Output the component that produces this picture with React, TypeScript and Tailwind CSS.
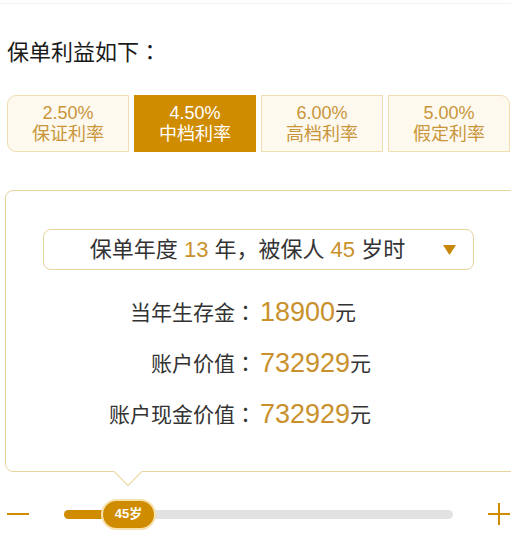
import { useState } from "react";

const rates = [
  { rate: "2.50%", name: "保证利率" },
  { rate: "4.50%", name: "中档利率" },
  { rate: "6.00%", name: "高档利率" },
  { rate: "5.00%", name: "假定利率" },
];

const rows = [
  { label: "当年生存金", value: "18900" },
  { label: "账户价值", value: "732929" },
  { label: "账户现金价值", value: "732929" },
];

// centred full-width colon, like the reference font draws it
const Colon = () => <span style={{ fontFamily: '"Noto Sans CJK JP", sans-serif' }}>：</span>;

export default function App() {
  const [active, setActive] = useState(1);

  return (
    <div
      className="w-[511px] h-[533px] overflow-hidden bg-white text-[#333]"
      style={{ fontFamily: '"Liberation Sans", "Noto Sans CJK SC", sans-serif' }}
    >
      <div className="h-[3px]" />
      <div className="h-px bg-[#f2f2f2]" />

      <h2 className="mt-[31px] pl-[7px] text-[22px] leading-[30px] text-[#1a1a1a]">
        保单利益如下<Colon />
      </h2>

      <div className="mt-[27px] flex gap-[5px] pl-[7px]">
        {rates.map((r, i) => (
          <button
            key={r.rate}
            onClick={() => setActive(i)}
            className={
              "w-[122px] h-[57px] shrink-0 flex flex-col items-center justify-center text-[18px] leading-[21px] border " +
              (i === active
                ? "bg-[#cf8c00] border-[#cf8c00] text-white"
                : "bg-[#fdf9ee] border-[#f0deb2] text-[#c9953a]") +
              (i === 0 ? " rounded-l-[9px]" : "") +
              (i === rates.length - 1 ? " rounded-tr-[9px]" : "")
            }
          >
            <span>{r.rate}</span>
            <span>{r.name}</span>
          </button>
        ))}
      </div>

      <div className="relative mt-[38px] ml-[5px] w-[520px] h-[282px] rounded-[8px] border border-[#e6d39e] bg-white">
        <div className="mt-[38px] ml-[37px] w-[431px] h-[41px] rounded-[8px] border border-[#e6d39e] flex items-center justify-center pr-[22px] relative text-[22px] text-[#333]">
          <span className="whitespace-pre">
            保单年度 <span className="text-[#c9912c]">13</span> 年，被保人 <span className="text-[#c9912c]">45</span> 岁时
          </span>
          <svg className="absolute left-[399px] top-[15px]" width="13" height="10" viewBox="0 0 13 10">
            <path d="M0 0 L13 0 L6.5 10 Z" fill="#c8860a" />
          </svg>
        </div>

        <div className="mt-[17px]">
          {rows.map((row) => (
            <div key={row.label} className="h-[51px] flex items-center">
              <span className="w-[250px] text-right text-[21px] text-[#333]">
                {row.label}
                <Colon />
              </span>
              <span className="ml-[4px] text-[27px] text-[#c9912c]">{row.value}</span>
              <span className="text-[21px] text-[#333]">元</span>
            </div>
          ))}
        </div>

        <div className="absolute left-[112px] bottom-[-11px] w-[20px] h-[20px] rotate-45 bg-white border-r border-b border-[#e6d39e]" />
      </div>

      <div className="mt-[25px] h-[34px] flex items-center">
        <div className="ml-[7px] w-[22px] h-[2px] bg-[#d08c00]" />
        <div className="relative ml-[35px] w-[389px] h-[9px] rounded-full bg-[#e2e2e2]">
          <div className="w-[50px] h-[9px] rounded-full bg-[#cf8c00]" />
          <div className="absolute left-[37px] top-[-11px] w-[55px] h-[31px] rounded-full bg-[#cf8c00] border-2 border-[#f6e2ae] flex items-center justify-center text-white text-[13px] font-bold">
            45岁
          </div>
        </div>
        <svg className="ml-[35px]" width="22" height="22" viewBox="0 0 22 22">
          <path d="M0 11 H22 M11 0 V22" stroke="#d08c00" strokeWidth="2" />
        </svg>
      </div>
    </div>
  );
}
